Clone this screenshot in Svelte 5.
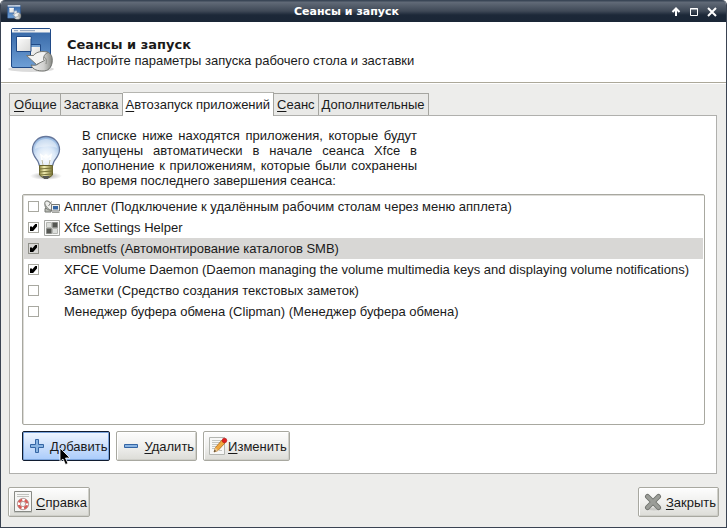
<script>
  let tab = $state(2);
  let selected = $state(2);
  const tabs = [
    ['О', 'бщие'],
    ['З', 'аставка', true],
    ['А', 'втозапуск приложений'],
    ['С', 'еанс'],
    ['Д', 'ополнительные', true]
  ];
  let apps = $state([
    { on: false, icon: 'dish', name: 'Апплет (Подключение к удалённым рабочим столам через меню апплета)' },
    { on: true, icon: 'xfce', name: 'Xfce Settings Helper' },
    { on: true, icon: '', name: 'smbnetfs (Автомонтирование каталогов SMB)' },
    { on: true, icon: '', name: 'XFCE Volume Daemon (Daemon managing the volume multimedia keys and displaying volume notifications)' },
    { on: false, icon: '', name: 'Заметки (Средство создания текстовых заметок)' },
    { on: false, icon: '', name: 'Менеджер буфера обмена (Clipman) (Менеджер буфера обмена)' }
  ]);
</script>

{#snippet sessionIcon(size, id)}
  <svg width={size} height={size} viewBox="0 0 48 48" aria-hidden="true">
    <defs>
      <linearGradient id="{id}a" x1="0" y1="0" x2="0" y2="1">
        <stop offset="0" stop-color="#3465a4" /><stop offset="1" stop-color="#6e9fd6" />
      </linearGradient>
      <linearGradient id="{id}b" x1="0" y1="0" x2="1" y2="1">
        <stop offset="0" stop-color="#fff" /><stop offset="1" stop-color="#d8d8d6" />
      </linearGradient>
      <linearGradient id="{id}c" x1="0" y1="0" x2="1" y2="0">
        <stop offset="0" stop-color="#eee" /><stop offset=".6" stop-color="#d0d0ce" /><stop offset="1" stop-color="#888a85" />
      </linearGradient>
    </defs>
    <ellipse cx="24" cy="44" rx="23" ry="3" fill="#000" opacity=".14" />
    <rect x="4.500" y="3.500" width="39" height="39" rx="1.500" fill="url(#{id}a)" stroke="#204a87" />
    <path d="M5 4h38v3.500H5z" fill="#f4f4f3" />
    <path d="M7 5.700h4M13 5.700h15" stroke="#8b9cb5" />
    <path d="M23.500 19.500h10v11h-10z" fill="url(#{id}b)" stroke="#204a87" />
    <path d="M24 20h9v2h-9z" fill="#729fcf" />
    <path d="M9.500 11.500h14.500v15H9.500z" fill="url(#{id}b)" stroke="#204a87" />
    <path d="M10 12h13.500v2H10z" fill="#fff" />
    <path d="M24 40c6 1 9-1 9-5 0-5 3-8 7-8 4 1 6 5 5 11-1 5-4 8-9 8-5 0-10-1-12-6z" fill="url(#{id}c)" stroke="#6e706c" />
    <path d="M36 32c3 0 4 3 3 7" fill="none" stroke="#888a85" />
    <path d="M19.500 30.500h7c3-4 9-5 15-3-4 1-5 4-5 7l1 1-8 4z" fill="#f3f3f2" stroke="#777975" />
  </svg>
{/snippet}

<div class="window">
  <header class="titlebar">
    <span class="app">{@render sessionIcon(16, 's')}</span>
    <h1>Сеансы и запуск</h1>
    <div class="controls">
      <button aria-label="Свернуть в заголовок"><svg width="10" height="10" viewBox="0 0 10 10"><path d="M5 1v8M1.500 5 5 1.500 8.500 5" fill="none" stroke="#fff" stroke-width="2" /></svg></button>
      <button aria-label="Развернуть"><svg width="10" height="10" viewBox="0 0 10 10"><path d="M1.500 1.500h7v7h-7zM1 2h8" fill="none" stroke="#fff" /></svg></button>
      <button aria-label="Закрыть окно"><svg width="10" height="10" viewBox="0 0 10 10"><path d="m1 1 8 8M9 1 1 9" stroke="#fff" stroke-width="2" /></svg></button>
    </div>
  </header>

  <div class="heading">
    {@render sessionIcon(48, 'l')}
    <div>
      <h2>Сеансы и запуск</h2>
      <p>Настройте параметры запуска рабочего стола и заставки</p>
    </div>
  </div>

  <main>
    <div class="tabs" role="tablist">
      {#each tabs as [key, rest, plain], i}
        <button role="tab" aria-selected={tab === i} class:active={tab === i} onclick={() => (tab = i)}><span class:key={!plain}>{key}</span>{rest}</button>
      {/each}
    </div>

    <section class="panel" role="tabpanel">
      <div class="intro">
        <svg width="48" height="48" viewBox="0 0 48 48" aria-hidden="true">
          <defs>
            <radialGradient id="glass" cx=".5" cy=".7" r=".75">
              <stop offset="0" stop-color="#fff" /><stop offset=".45" stop-color="#dce9f8" /><stop offset="1" stop-color="#86aedd" />
            </radialGradient>
            <radialGradient id="shade"><stop offset="0" stop-opacity=".35" /><stop offset="1" stop-opacity="0" /></radialGradient>
            <linearGradient id="brass"><stop offset="0" stop-color="#8a8440" /><stop offset=".35" stop-color="#f4f0b4" /><stop offset="1" stop-color="#7a7432" /></linearGradient>
          </defs>
          <ellipse cx="24" cy="42" rx="16" ry="4" fill="url(#shade)" />
          <path d="M24 2.500c-8 0-13.500 6-13.500 13 0 6 4 9 5.500 12 1 2 1 4 2 5h12c1-1 1-3 2-5 1.500-3 5.500-6 5.500-12 0-7-5.500-13-13.500-13z" fill="url(#glass)" stroke="#66779b" stroke-width="1.300" />
          <path d="M13 15c0-6 5-10 11-10s11 4 11 9c-5-2-16-2-22 1z" fill="#fff" opacity=".4" />
          <path d="M21 31l-2-10 3 2 2-2 2 2 3-2-2 10" fill="none" stroke="#fff" stroke-width="1.500" />
          <path d="M21 31l-1-5M27 31l1-5" stroke="#b7b7a0" />
          <path d="M17.500 31.500h13V41l-3 2.500h-7l-3-2.500z" fill="url(#brass)" stroke="#68642f" />
          <path d="M17 35l14-1M17 38l14-1M18 41l12-1" stroke="#77733a" />
          <path d="M20 42h8l-2 3h-4z" fill="#555753" />
        </svg>
        <p>
          <span>В списке ниже находятся приложения, которые будут</span>
          <span>запущены автоматически в начале сеанса Xfce в</span>
          <span>дополнение к приложениям, которые были сохранены</span>
          <span>во время последнего завершения сеанса:</span>
        </p>
      </div>

      <ul class="list">
        {#each apps as app, i}
          <li class:selected={selected === i}>
            <input type="checkbox" id="app{i}" bind:checked={app.on} />
            <span class="slot">
              {#if app.icon === 'dish'}
                <svg width="16" height="16" viewBox="0 0 16 16" aria-hidden="true">
                  <path d="M1 9.500h6v3.500H1z" fill="#babdb6" stroke="#777975" />
                  <path d="M1.500 3C-.5 8 3 12 8.500 11z" fill="#d3d7cf" stroke="#777975" />
                  <ellipse cx="5" cy="6.500" rx="2.800" ry="5.300" transform="rotate(-40 5 6.500)" fill="#eeeeec" stroke="#888a85" />
                  <path d="M4.500 7l3-4.500" stroke="#888a85" />
                  <path d="M7.500 5.500h8v6.500h-8z" fill="#eeeeec" stroke="#777975" /><path d="M9 7h5v3.500H9z" fill="#3465a4" />
                  <path d="M8 13.500h7.500" stroke="#a0a29d" />
                </svg>
              {:else if app.icon === 'xfce'}
                <svg width="16" height="16" viewBox="0 0 16 16" aria-hidden="true">
                  <path d="M.5.500h15v15H.5z" fill="#fafafa" stroke="#a5a7a3" />
                  <path d="M2.500 2.500h5v5h-5zM8.500 8.500h5v5h-5z" fill="#dcdedb" stroke="#b5b7b3" />
                  <path d="M8.500 2.500h5v5h-5zM2.500 8.500h5v5h-5z" fill="#555753" stroke="#8b8d89" />
                </svg>
              {/if}
            </span>
            <label for="app{i}">{app.name}</label>
          </li>
        {/each}
      </ul>

      <div class="actions">
        <button class="btn add">
          <svg width="16" height="16" viewBox="0 0 16 16" aria-hidden="true"><path d="M6.500 1.500h3v5h5v3h-5v5h-3v-5h-5v-3h5z" fill="#8ab4e2" stroke="#3465a4" stroke-linejoin="round" /></svg>
          <span><span class="key">Д</span>обавить</span>
          <svg class="pointer" width="13" height="19" viewBox="0 0 13 19" aria-hidden="true"><path d="M1 1v13.500l3-2.500 2.500 5.500 2.500-1-2.500-5.500h4.500z" fill="#000" stroke="#fff" stroke-width=".8" /></svg>
        </button>
        <button class="btn">
          <svg width="16" height="16" viewBox="0 0 16 16" aria-hidden="true"><path d="M1.500 6.500h13v3h-13z" fill="#8ab4e2" stroke="#3465a4" stroke-linejoin="round" /></svg>
          <span><span class="key">У</span>далить</span>
        </button>
        <button class="btn edit">
          <svg width="20" height="20" viewBox="0 0 20 20" aria-hidden="true">
            <path d="M1.500 1.500h15v17h-15z" fill="#f7f7f6" stroke="#b4b6b1" />
            <path d="M4 4.500h9M4 6.500h8M4 8.500h6M4 10.500h4M4 12.500h3M11 14.500h3" stroke="#c4c6c2" />
            <path d="M6 16l1.500-4.500L14 4l3 3-7 7.500z" fill="#f0a63c" stroke="#a8671b" stroke-width=".8" />
            <path d="M6 16l1.500-4.500 2.500 3z" fill="#e9c58d" /><path d="M6 16l.6-2 1.400 1z" fill="#222" />
            <circle cx="16.500" cy="4.500" r="2.300" fill="#e02020" stroke="#b01010" stroke-width=".6" />
          </svg>
          <span><span class="key">И</span>зменить</span>
        </button>
      </div>
    </section>

    <footer>
      <button class="btn help">
        <svg width="20" height="22" viewBox="0 0 20 22" aria-hidden="true">
          <path d="M1.500.500h17v20h-17z" fill="#f6f6f5" stroke="#888a85" /><path d="M1 21.500h18" stroke="#c5c7c2" />
          <path d="M4 3.500h12M4 5.500h12" stroke="#c0c2be" />
          <circle cx="10" cy="13" r="4.200" fill="none" stroke="#dc5a55" stroke-width="2.800" />
          <circle cx="10" cy="13" r="4.200" fill="none" stroke="#fff" stroke-width="2.400" stroke-dasharray="2.600 3.997" stroke-dashoffset="1.300" />
          <circle cx="10" cy="13" r="5.700" fill="none" stroke="#a58886" stroke-width=".7" /><circle cx="10" cy="13" r="2.600" fill="none" stroke="#a58886" stroke-width=".7" />
        </svg>
        <span><span class="key">С</span>правка</span>
      </button>
      <button class="btn close">
        <svg width="20" height="20" viewBox="0 0 20 20" aria-hidden="true">
          <ellipse cx="11" cy="17" rx="8" ry="1.500" opacity=".12" />
          <path d="M4.500 4.500l11 11M15.500 4.500l-11 11" stroke="#6f716d" stroke-width="5" stroke-linecap="round" />
          <path d="M4.500 4.500l11 11M15.500 4.500l-11 11" stroke="#9b9d98" stroke-width="3.200" stroke-linecap="round" />
        </svg>
        <span><span class="key">З</span>акрыть</span>
      </button>
    </footer>
  </main>
</div>

<style>
  :global(body) { margin: 0; background: #fff; }
  .window {
    box-sizing: border-box;
    min-height: 100vh;
    display: flex;
    flex-direction: column;
    border: solid #3a4352;
    border-width: 0 1px 1px;
    border-radius: 5px 5px 0 0;
    overflow: hidden;
    background: #ededeb;
    color: #1a1a1a;
    font: 13px/15px 'Liberation Sans', Arial, sans-serif;
  }
  button { font: inherit; color: inherit; margin: 0; cursor: default; white-space: nowrap; }
  svg { display: block; flex: none; }
  h1, h2, p, ul { margin: 0; padding: 0; }
  .key { text-decoration: underline; text-underline-offset: 2px; }

  .titlebar {
    display: flex;
    align-items: center;
    height: 22px;
    padding: 0 9px 0 5px;
    background: linear-gradient(#3a4656 0, #3a4656 1px, #626b78 2px, #3f4957 11px, #1c2838 15px, #1a2636);
  }
  .app { padding-top: 2px; }
  h1 {
    flex: 1;
    padding-top: 2px;
    text-align: center;
    font: bold 11px/20px 'DejaVu Sans', sans-serif;
    color: #fff;
  }
  .controls { display: flex; gap: 8px; padding-top: 2px; }
  .controls button { border: 0; background: none; padding: 0; }

  .heading {
    box-sizing: border-box;
    height: 61px;
    display: flex;
    align-items: center;
    gap: 12px;
    padding: 0 6px;
    background: #fff;
    border-bottom: 1px solid #aca899;
  }
  .heading > svg { margin-bottom: 6px; }
  h2 { font: bold 13px/16px 'DejaVu Sans', sans-serif; }

  main { flex: 1; display: flex; flex-direction: column; padding: 8px 8px 10px; border-top: 1px solid #fff; }
  .tabs { display: flex; align-items: flex-end; }
  .tabs button {
    height: 22px;
    padding: 0 3px;
    border: 1px solid #a5a5a0;
    border-width: 1px 1px 0 0;
    background: #e9e9e7;
  }
  .tabs button:first-child { border-left-width: 1px; padding-left: 4px; }
  .tabs .active { height: 24px; background: #fff; border-top-color: #b5b5b0; margin-bottom: -1px; z-index: 1; position: relative; }
  .panel {
    flex: 1;
    display: flex;
    flex-direction: column;
    margin-right: 1px;
    padding: 12px;
    padding-right: 11px;
    background: #fff;
    border: 1px solid #b0b0ad;
  }
  .intro { display: flex; align-items: center; gap: 12px; padding-bottom: 6px; }
  .intro p { width: 335px; }
  .intro p span { display: block; text-align-last: justify; white-space: nowrap; }
  .intro p span:last-child { text-align-last: left; }

  .list {
    flex: 1;
    list-style: none;
    border: 1px solid #a8a8a0;
    border-radius: 2px;
    box-shadow: inset 1px 1px #dddcd8;
    padding: 1px;
  }
  li { display: flex; align-items: center; height: 21px; padding-left: 4px; }
  .selected { background: #d8d7d5; }
  .slot { width: 16px; margin: 0 4px 0 5px; }
  input {
    box-sizing: border-box;
    appearance: none;
    width: 11px;
    height: 11px;
    margin: 0;
    border: 1px solid #a8a8a0;
    background: #fff;
    display: grid;
    place-items: center;
  }
  .selected input { background: #d8d7d5; border-color: #8f8f88; }
  input:checked::before {
    content: '';
    width: 7px;
    height: 7px;
    background: #000;
    clip-path: polygon(0 35%, 28% 35%, 32% 50%, 75% 0, 100% 0, 100% 35%, 45% 100%, 0 100%);
  }

  .actions { display: flex; gap: 6px; padding-top: 6px; }
  .btn {
    position: relative;
    display: flex;
    align-items: center;
    height: 30px;
    padding: 0 2px 0 6px;
    gap: 5px;
    border: 1px solid #a8a8a0;
    border-radius: 2px;
    background: linear-gradient(#fdfdfd, #f0f0ee 50%, #dcdcd7);
    box-shadow: inset 1px 1px #fff, inset -1px -1px #cfcfc9;
  }
  .add {
    border-color: #101c30;
    background: linear-gradient(#f0f6ff, #cde0fc 50%, #a9cbfb);
    box-shadow: inset 0 0 0 1px #7ba4dc;
  }
  .edit { padding-left: 4px; gap: 0; }
  .pointer { position: absolute; left: 36px; top: 15px; }
  footer { display: flex; justify-content: space-between; margin: 13px -1px 0; }
  .help, .close { padding-left: 4px; gap: 3px; }
</style>
